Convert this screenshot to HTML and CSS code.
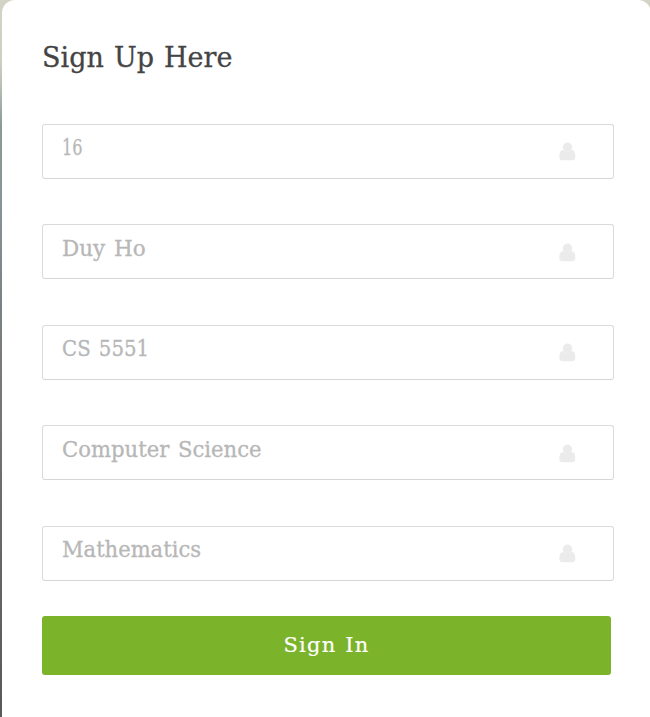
FILE: index.html
```html
<!DOCTYPE html>
<html lang="en">
<head>
<meta charset="utf-8">
<title>Sign Up</title>
<link rel="stylesheet" href="styles.css">
</head>
<body>
<svg class="defs" aria-hidden="true"><symbol id="user" viewBox="0 0 17 19"><ellipse cx="8.5" cy="5.200" rx="4.700" ry="4.700"/><path d="M4 8C1.500 8.200.3 10.500.3 14.800Q.3 18.200 3.100 18.200H13.500Q16.300 18.200 16.300 14.800C16.300 10.500 15.300 8.200 12.800 8Q8.500 11.500 4 8Z"/></symbol></svg>
<main class="card">
<h1><span>Sign Up Here</span></h1>
<form>
<div class="field"><span class="id">16</span><svg class="icon"><use href="#user"/></svg></div>
<div class="field even"><span class="name">Duy Ho</span><svg class="icon"><use href="#user"/></svg></div>
<div class="field"><span class="course">CS 5551</span><svg class="icon"><use href="#user"/></svg></div>
<div class="field even"><span class="major">Computer Science</span><svg class="icon"><use href="#user"/></svg></div>
<div class="field"><span class="minor">Mathematics</span><svg class="icon"><use href="#user"/></svg></div>
<button type="button"><span>Sign In</span></button>
</form>
</main>
</body>
</html>
```
FILE: styles.css
```css
* { box-sizing: border-box; }
body {
  margin: 0;
  height: 717px;
  overflow: hidden;
  padding-left: 2px;
  background: linear-gradient(#d3d3c6 0, #cecfc1 60px, #bac0b5 85px, #899b98 125px, #879596 200px, #7b8285 300px, #757477 420px, #6a6669 540px, #5c575a 717px);
  font-family: "DejaVu Serif", serif;
}
.defs { display: none; }
.card {
  width: 649px;
  height: 740px;
  padding: 38px 0 0 40px;
  background: #fff;
  border-radius: 13px;
}
h1 {
  margin: 0 0 46px;
  height: 40px;
  line-height: 40px;
  font-size: 27px;
  font-weight: 400;
  color: #444;
  white-space: nowrap;
  -webkit-text-stroke: 0.3px #444;
}
h1 span, .field span, button span {
  display: inline-block;
  transform-origin: left center;
}
h1 span { word-spacing: 1.5px; }
.field {
  display: flex;
  align-items: flex-start;
  justify-content: space-between;
  width: 572px;
  height: 55px;
  margin-bottom: 45.45px;
  padding: 8px 37px 0 19px;
  border: 1px solid #dadada;
  border-bottom-color: #d6d6d6;
  border-radius: 3px;
  font-size: 21.5px;
  line-height: 30px;
  color: #b7b7b7;
  white-space: nowrap;
  -webkit-text-stroke: 0.3px #b7b7b7;
}
.field.even { padding-top: 9px; }
.id { transform: scaleX(0.75); }
.name { word-spacing: 2px; }
.course { transform: scaleX(0.92); word-spacing: 2px; }
.major { transform: scaleX(0.984); word-spacing: 2px; }
.minor { transform: scaleX(0.98); }
.icon { width: 17px; height: 19px; margin-top: 9px; fill: #ebebeb; }
button {
  display: block;
  width: 569px;
  height: 59px;
  margin-top: -10.25px;
  padding: 0;
  border: 0;
  border-radius: 3px;
  background: #7bb32b;
  color: #fff;
  font: 21px/59px "DejaVu Serif", serif;
  letter-spacing: 1.2px;
  word-spacing: 1px;
  -webkit-text-stroke: 0.2px #fff;
}
```
